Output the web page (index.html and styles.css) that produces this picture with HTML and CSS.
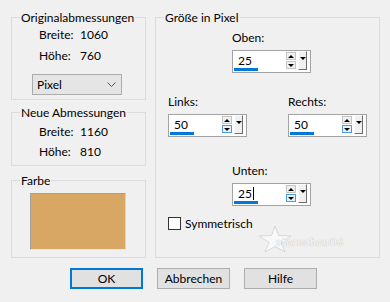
FILE: index.html
```html
<!DOCTYPE html>
<html lang="de">
<head>
  <meta charset="UTF-8" />
  <title>Rand hinzufügen</title>
  <link rel="stylesheet" href="styles.css">
</head>
<body>
  <div class="dialog">
    <div class="panels">
      <div class="left">
        <fieldset class="group group-orig">
          <legend>Originalabmessungen</legend>
          <div class="dims">
            <div class="dim-row"><span class="dim-label">Breite:</span><span>1060</span></div>
            <div class="dim-row"><span class="dim-label">Höhe:</span><span>760</span></div>
          </div>
          <div class="select">
            <span>Pixel</span>
            <svg width="9" height="5" viewBox="0 0 9 5"><polyline points="0.5,0.5 4.5,4.5 8.5,0.5" fill="none" stroke="#555" stroke-width="1"/></svg>
          </div>
        </fieldset>

        <fieldset class="group group-new">
          <legend>Neue Abmessungen</legend>
          <div class="dims">
            <div class="dim-row"><span class="dim-label">Breite:</span><span>1160</span></div>
            <div class="dim-row"><span class="dim-label">Höhe:</span><span>810</span></div>
          </div>
        </fieldset>

        <fieldset class="group group-color">
          <legend>Farbe</legend>
          <div class="swatch-wrap">
            <div class="swatch"></div>
          </div>
        </fieldset>
      </div>

      <fieldset class="group group-size">
        <legend>Größe in Pixel</legend>
        <div class="size-grid">
          <div class="row row-top">
            <div class="field field-center">
              <div class="field-label">Oben:</div>
              <div class="spin">
                <div class="spin-value"><span class="spin-text">25</span><span class="spin-bar"></span></div>
                <div class="spin-arrows">
                  <span class="arrow up"></span>
                  <span class="arrow down"></span>
                </div>
                <div class="spin-drop"></div>
              </div>
            </div>
          </div>

          <div class="row row-mid">
            <div class="field">
              <div class="field-label">Links:</div>
              <div class="spin">
                <div class="spin-value"><span class="spin-text">50</span><span class="spin-bar"></span></div>
                <div class="spin-arrows">
                  <span class="arrow up"></span>
                  <span class="arrow down hot"></span>
                </div>
                <div class="spin-drop"></div>
              </div>
            </div>
            <div class="field">
              <div class="field-label">Rechts:</div>
              <div class="spin">
                <div class="spin-value"><span class="spin-text">50</span><span class="spin-bar"></span></div>
                <div class="spin-arrows">
                  <span class="arrow up"></span>
                  <span class="arrow down hot"></span>
                </div>
                <div class="spin-drop"></div>
              </div>
            </div>
          </div>

          <div class="row row-bottom">
            <div class="field field-center">
              <div class="field-label">Unten:</div>
              <div class="spin">
                <div class="spin-value"><span class="spin-text">25<span class="caret"></span></span><span class="spin-bar"></span></div>
                <div class="spin-arrows">
                  <span class="arrow up"></span>
                  <span class="arrow down hot"></span>
                </div>
                <div class="spin-drop"></div>
              </div>
            </div>
          </div>

          <label class="check">
            <span class="check-box"></span>
            <span>Symmetrisch</span>
          </label>
        </div>

        <div class="watermark">
          <svg width="34" height="28" viewBox="0 0 34 28">
            <polygon points="17,1 20.5,10.5 33,11 23,17.5 27,27 17,21.5 7,27 11,17.5 1,11 13.5,10.5" fill="#f9f9f9" stroke="#cfcfcf" stroke-width="0.8"/>
          </svg>
          <span>sternchen06</span>
        </div>
      </fieldset>
    </div>

    <div class="buttons">
      <button class="btn btn-default">OK</button>
      <button class="btn">Abbrechen</button>
      <button class="btn">Hilfe</button>
    </div>
  </div>
</body>
</html>
```
FILE: styles.css
```css
* {
  box-sizing: border-box;
}
body {
  margin: 0;
  background-color: #f0f0f0;
  color: #000;
  font-family: Lato, "Noto Sans", sans-serif;
  font-size: 12px;
}
.dialog {
  padding: 9px 0 0 11px;
  width: 380px;
}
.panels {
  display: flex;
  gap: 9px;
}
.left {
  width: 135px;
  display: flex;
  flex-direction: column;
}

/* group boxes */
.group {
  margin: 0;
  padding: 0;
  min-width: 0;
  border: 1px solid #dcdcdc;
}
.group legend {
  margin-left: 8px;
  padding: 0 1px;
  line-height: 17px;
}
.group-orig {
  padding-bottom: 4px;
}
.group-new {
  margin-top: 4px;
  padding: 2px 0 4px 0;
}
.group-color {
  margin-top: 6px;
  padding: 4px 0 7px 0;
}
.group-size {
  position: relative;
  width: 225px;
}

.dims {
  display: flex;
  flex-direction: column;
  gap: 3px;
  padding-left: 27px;
}
.group-new .dims {
  gap: 2px;
}
.dim-row {
  display: flex;
  height: 18px;
  line-height: 18px;
}
.dim-label {
  width: 41px;
}

.select {
  display: flex;
  justify-content: space-between;
  align-items: center;
  width: 90px;
  height: 21px;
  margin: 9px 0 0 20px;
  padding: 0 5px 0 4px;
  background-color: #e5e5e5;
  border: 1px solid #acacac;
}

.swatch-wrap {
  padding-left: 18px;
}
.swatch {
  width: 96px;
  height: 57px;
  background-color: #d9a764;
  border: 1px solid #a0a0a0;
  border-right-color: #e8d2b2;
  border-bottom-color: #f4e6d0;
}

/* size fields */
.size-grid {
  padding: 4px 0 0 12px;
}
.row {
  display: flex;
  gap: 41px;
}
.row-mid {
  margin-top: 21px;
}
.row-bottom {
  margin-top: 26px;
}
.field-center {
  margin-left: 64px;
}
.field-label {
  line-height: 16px;
  margin-bottom: 4px;
}
.spin {
  display: flex;
  width: 79px;
  height: 23px;
  background-color: #fff;
  border: 1px solid #a3a3a3;
}
.spin-value {
  flex: 1;
  display: flex;
  flex-direction: column;
  padding: 1px 0 0 1px;
}
.spin-text {
  display: flex;
  align-items: center;
  height: 16px;
  padding-left: 4px;
}
.caret {
  width: 1px;
  height: 13px;
  margin-left: 1px;
  background-color: #000;
}
.spin-bar {
  width: 24px;
  height: 3px;
  background-color: #0078d7;
}
.spin-arrows {
  display: flex;
  flex-direction: column;
  gap: 1px;
  width: 10px;
  margin-top: 1px;
}
.arrow {
  display: flex;
  justify-content: center;
  align-items: center;
  height: 8px;
  background-color: #f0f0f0;
  border: 1px solid #c4c4c4;
}
.arrow.hot {
  background-color: #e5f1fb;
  border-color: #4d9be3;
}
.arrow::after {
  content: "";
  border-left: 3px solid transparent;
  border-right: 3px solid transparent;
}
.arrow.up::after {
  border-bottom: 3px solid #000;
}
.arrow.down::after {
  border-top: 3px solid #000;
}
.spin-drop {
  display: flex;
  justify-content: center;
  padding-top: 5px;
  width: 9px;
  height: 19px;
  margin: 0 3px 0 2px;
  background-color: #f0f0f0;
  border: 1px solid #fff;
  border-right-color: #6d6d6d;
  border-bottom-color: #6d6d6d;
}
.spin-drop::after {
  content: "";
  height: 0;
  border-left: 3px solid transparent;
  border-right: 3px solid transparent;
  border-top: 3px solid #000;
}

.check {
  display: flex;
  align-items: center;
  gap: 4px;
  height: 16px;
  margin-top: 9px;
}
.check-box {
  width: 13px;
  height: 13px;
  background-color: #fff;
  border: 1px solid #333;
}

.watermark {
  position: absolute;
  left: 102px;
  top: 199px;
  display: flex;
  align-items: center;
  color: #fdfdfd;
  font-style: italic;
  font-size: 11px;
  letter-spacing: 1px;
  text-shadow: 0 0 1px #b8b8b8, 0 0 1px #c8c8c8;
}
.watermark span {
  margin-left: -16px;
  margin-top: 4px;
}

/* buttons */
.buttons {
  display: flex;
  gap: 14px;
  margin-top: 10px;
  padding-left: 59px;
}
.btn {
  width: 73px;
  height: 21px;
  padding: 0;
  font-family: inherit;
  font-size: 12px;
  color: #000;
  background-color: #e1e1e1;
  border: 1px solid #adadad;
}
.btn-default {
  border: 2px solid #0078d7;
}
```
